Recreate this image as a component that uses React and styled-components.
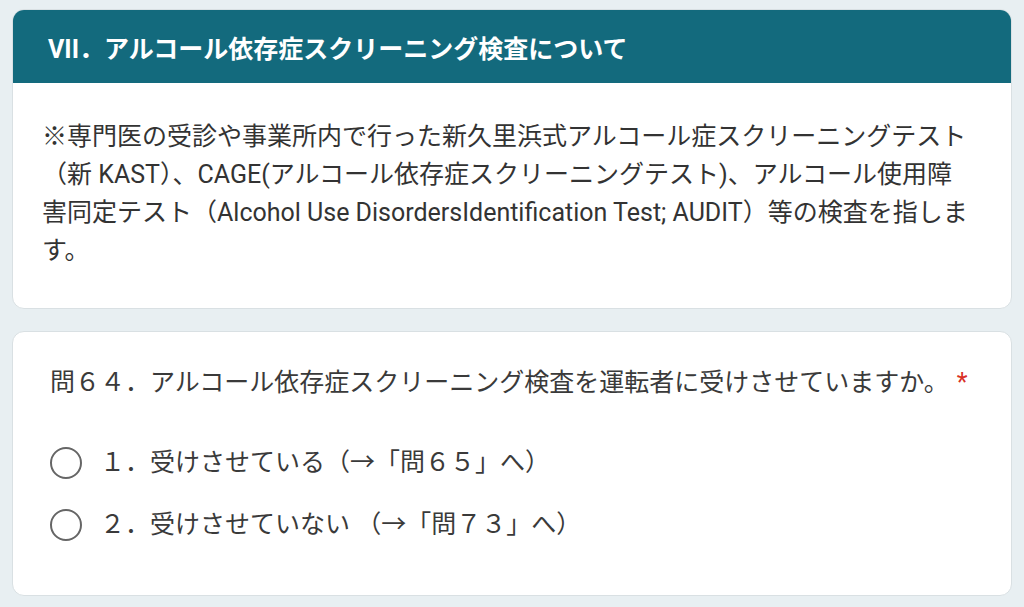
import styled, { createGlobalStyle } from "styled-components";

const GlobalStyle = createGlobalStyle`
  body {
    margin: 0;
    background: #e8eff2;
    font-family: Roboto, "Noto Sans CJK JP", sans-serif;
  }
`;

const Page = styled.div`
  display: flex;
  flex-direction: column;
  gap: 22px;
  padding: 9px 12px 12px 12px;
`;

const Card = styled.section`
  background: #ffffff;
  border: 1px solid #d9e0e3;
  border-radius: 12px;
  overflow: hidden;
`;

const SectionHeader = styled.h2`
  margin: 0;
  background: #136a7d;
  color: #ffffff;
  font-size: 25px;
  font-weight: 700;
  height: 73px;
  display: flex;
  align-items: center;
  padding: 0 35px;
`;

const Note = styled.p`
  margin: 0;
  padding: 35px 40px 38px 29px;
  font-size: 25px;
  line-height: 38px;
  color: #333333;
`;

const Question = styled.div`
  padding: 32px 38px 51px 37px;
`;

const QuestionTitle = styled.p`
  margin: 0 0 42px 0;
  font-size: 25px;
  line-height: 38px;
  color: #3a3a3a;
`;

const Required = styled.span`
  color: #d93025;
  margin-left: 8px;
`;

const Options = styled.div`
  display: flex;
  flex-direction: column;
  gap: 24px;
`;

const Option = styled.label`
  display: flex;
  align-items: center;
  gap: 18px;
  font-size: 25px;
  line-height: 38px;
  color: #3a3a3a;
  cursor: pointer;
  white-space: pre;
`;

const Radio = styled.span`
  width: 28px;
  height: 28px;
  border: 2px solid #666666;
  border-radius: 50%;
  flex-shrink: 0;
`;

const options = [
  "１．受けさせている（→「問６５」へ）",
  "２．受けさせていない （→「問７３」へ）",
];

export default function App() {
  return (
    <>
      <GlobalStyle />
      <Page>
        <Card>
          <SectionHeader>VII．アルコール依存症スクリーニング検査について</SectionHeader>
          <Note>
            ※専門医の受診や事業所内で行った新久里浜式アルコール症スクリーニングテスト（新
            KAST）、CAGE(アルコール依存症スクリーニングテスト)、アルコール使用障害同定テスト（Alcohol
            Use DisordersIdentification Test; AUDIT）等の検査を指します。
          </Note>
        </Card>
        <Card>
          <Question>
            <QuestionTitle>
              問６４．アルコール依存症スクリーニング検査を運転者に受けさせていますか。
              <Required>*</Required>
            </QuestionTitle>
            <Options>
              {options.map((label) => (
                <Option key={label}>
                  <Radio />
                  {label}
                </Option>
              ))}
            </Options>
          </Question>
        </Card>
      </Page>
    </>
  );
}
